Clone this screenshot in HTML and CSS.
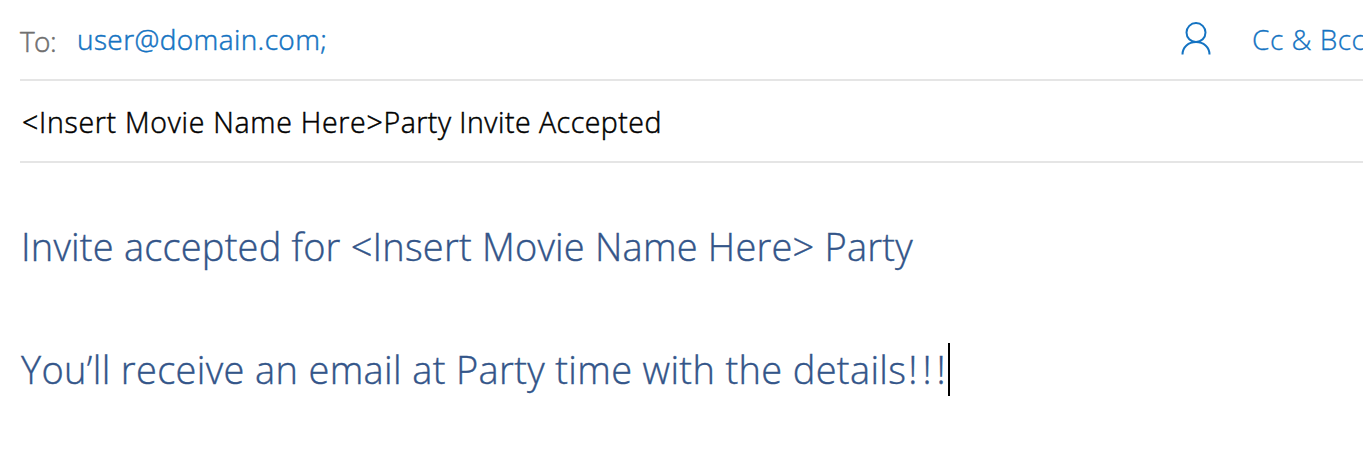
FILE: index.html
```html
<!DOCTYPE html>
<html lang="en">
<head>
<meta charset="utf-8">
<title>New message</title>
<link rel="stylesheet" href="styles.css">
</head>
<body>
<main class="compose">
  <header class="row recipients">
    <span class="label">To:</span>
    <span class="address">user@domain.com;</span>
    <svg class="person" viewBox="0 0 30 34" aria-hidden="true"><circle cx="15" cy="10.6" r="9.5"/><path d="M1.500 32.500C1.500 25 7.500 20.100 15 20.100S28.500 25 28.500 32.500"/></svg>
    <span class="cc">Cc &amp; Bcc</span>
  </header>
  <div class="row subject"><span class="movie">&lt;Insert Movie Name Here&gt;</span><span class="status">Party Invite Accepted</span></div>
  <section class="body">
    <p class="line first">Invite accepted for &lt;Insert Movie Name Here&gt; Party</p>
    <p class="line second">You’ll receive an email at Party time with the details<span class="marks">!!!</span><span class="caret"></span></p>
  </section>
</main>
</body>
</html>
```
FILE: styles.css
```css
body { margin: 0; background: #fff; overflow: hidden; font-family: "Open Sans", "Noto Sans", sans-serif; font-weight: 300; }
.compose { width: 1363px; height: 450px; padding-left: 20px; box-sizing: border-box; overflow: hidden; }
.row { display: flex; box-sizing: border-box; border-bottom: 2px solid #e5e5e5; white-space: nowrap; -webkit-text-stroke: 0.5px currentColor; }
.recipients { height: 81px; line-height: 40px; padding-top: 19px; color: #1473c2; font-size: 28px; }
.label { width: 57px; flex: none; color: #707070; padding-top: 2px; letter-spacing: -0.6px; }
.address { width: 1104px; flex: none; letter-spacing: 0.4px; }
.person { width: 30px; height: 34px; margin-top: 3px; flex: none; fill: none; stroke: #1473c2; stroke-width: 2; }
.cc { margin-left: 41px; flex: none; letter-spacing: 0.5px; -webkit-text-stroke-width: 0.3px; }
.subject { height: 82px; padding: 21px 0 0 2px; line-height: 40px; font-size: 28.5px; color: #000; }
.movie { letter-spacing: 0.72px; }
.status { letter-spacing: 0.5px; }
.body { padding: 53px 0 0 1px; color: #335589; font-size: 38px; -webkit-text-stroke: 0.4px currentColor; }
.line { display: flex; align-items: center; margin: 0; height: 60px; white-space: nowrap; }
.first { letter-spacing: 0.2px; }
.second { margin-top: 63px; letter-spacing: 0.35px; }
.marks { letter-spacing: 5px; margin: 0 -3px 0 2px; }
.caret { width: 2px; height: 53px; background: #000; }
```
